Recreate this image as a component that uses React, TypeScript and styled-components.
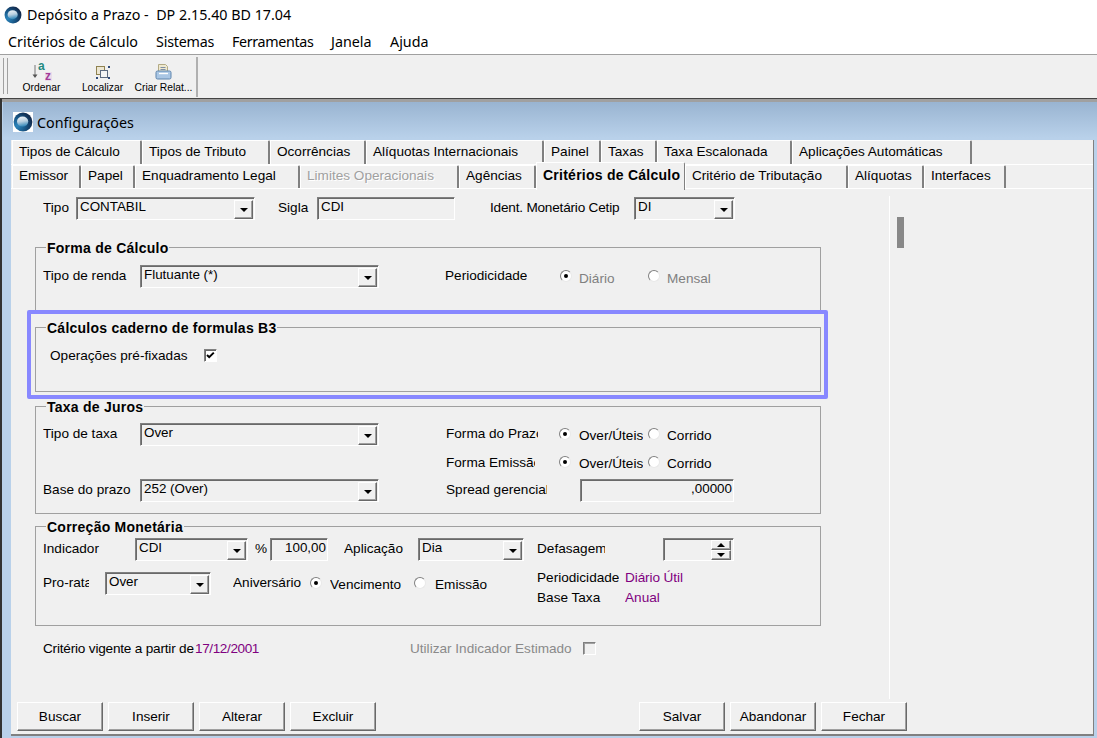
import React from "react";
import styled, { createGlobalStyle } from "styled-components";

const Global = createGlobalStyle`
  html, body { margin: 0; padding: 0; background: #fff; }
  #root { width: 1097px; height: 738px; overflow: hidden; }
`;
const ui = `"Noto Sans", "Open Sans", sans-serif`;
const classic = `"Liberation Sans", Arial, sans-serif`;

const Page = styled.div`
  width: 1097px; height: 738px; display: flex; flex-direction: column; overflow: hidden; background: #fff; color: #000;
`;
const TitleBar = styled.div`
  height: 30px; display: flex; align-items: center; gap: 5px; padding-left: 4px; font: 14.3px ${ui}; box-sizing: border-box; padding-bottom: 1px;
`;
const TitleText = styled.span` white-space: pre; `;
const MenuBar = styled.div`
  height: 24px; display: flex; padding: 0 0 2px 8px; box-sizing: border-box; align-items: center; font: 14.3px ${ui};
`;
const MenuItem = styled.span<{ $w: number; $ls?: number }>`
  width: ${(p) => p.$w}px; letter-spacing: ${(p) => p.$ls ?? 0}px; white-space: nowrap;
`;
const Toolbar = styled.div`
  height: 43px; display: flex; background: #f0f0f0; border-top: 1px solid #a0a0a0; padding-left: 3px;
`;
const Grip = styled.div`
  width: 3px; margin-top: 3px; height: 36px; border-left: 1px solid #a0a0a0; border-right: 1px solid #a0a0a0; margin-right: 3px;
`;
const ToolGroup = styled.div`
  width: 185px; display: flex; border-right: 2px solid #b0b0b0; margin-top: 2px; margin-bottom: 1px;
`;
const ToolButton = styled.div`
  width: 61px; display: flex; flex-direction: column; align-items: center; padding-top: 5px; font: 10.3px/14px ${classic};
  white-space: nowrap;
`;
const ToolIcon = styled.span` height: 19px; display: flex; align-items: center; `;
const IconSvg = styled.svg` overflow: visible; `;
const Window = styled.div`
  flex: 1; display: flex; flex-direction: column; border-top: 1px solid #444; border-left: 2px solid #333; min-height: 0;
  background: linear-gradient(#a0a0a0 0 3px, #b9d1ea 3px);
`;
const WinTitle = styled.div`
  height: 36px; margin: 3px 0 0 1px; padding: 4px 0 0 10px; display: flex; align-items: center; gap: 4px; font: 14.3px ${ui};
  background: linear-gradient(#99b4d1, #b9d1ea);
  box-sizing: border-box;
`;
const IconBox = styled.span` width: 20px; height: 20px; background: #fff; display: flex; `;
const Client = styled.div`
  flex: 1; margin: 2px 3px 2px 9px; background: #f0f0f0; border-bottom: 2px solid #808080;
  border-right: 1px solid #808080; display: flex; flex-direction: column; min-height: 0;
`;
const TabRow = styled.div<{ $line?: boolean }>`
  height: 24px; display: flex; padding-left: 1px; flex: none;
  ${(p) => (p.$line ? "border-top: 1px solid #fff; height: 23px; border-bottom: 1px solid #fff;" : "")}
`;
const Tab = styled.div<{ $w: number; $active?: boolean; $off?: boolean; $pb: number }>`
  width: ${(p) => p.$w}px; box-sizing: border-box; padding: 0 0 ${(p) => p.$pb}px 6px; display: flex; align-items: center; white-space: nowrap;
  font: 13.6px ${classic};
  color: ${(p) => (p.$off ? "#a0a0a0" : "#000")};
  ${(p) => (p.$off ? "text-shadow: 1px 1px 0 #fff;" : "")}
  border-left: 1px solid #fff; border-top: 1px solid #fff; border-right: 2px solid #808080; border-top-right-radius: 2px;
  ${(p) =>
    p.$active
      ? `height: 28px; margin-top: -3px; background: #f0f0f0; position: relative; z-index: 1; padding-bottom: 4px; border-right-width: 1px;
         font: bold 14px ${classic}; letter-spacing: 0.25px;`
      : ""}
`;
const Body = styled.div` flex: 1; display: flex; min-height: 0; flex-direction: column; `;
const Panels = styled.div` display: flex; height: 510px; flex: none; `;
const Form = styled.div`
  width: 879px; margin-top: 7px; box-sizing: border-box; border-right: 1px solid #fff; padding: 1px 0 0 24px;
  display: flex; flex-direction: column; height: 503px;
`;
const Scroll = styled.div` width: 7px; height: 31px; background: #888; margin: 28px 0 0 7px; `;
const Row = styled.div<{ $h?: number; $pl?: number; $mt?: number }>`
  display: flex; align-items: center; height: ${(p) => p.$h ?? 23}px; flex: none;
  padding-left: ${(p) => p.$pl ?? 0}px; margin-top: ${(p) => p.$mt ?? 0}px;
  font: 13.6px ${classic};
`;
const Label = styled.span<{ $w?: number; $ml?: number; $dy?: number; $c?: string; $ls?: number }>`
  display: block; white-space: nowrap; overflow: hidden; line-height: 15px;
  ${(p) => (p.$w ? `width: ${p.$w}px; flex: none;` : "")}
  margin-left: ${(p) => p.$ml ?? 0}px;
  letter-spacing: ${(p) => p.$ls ?? 0}px;
  position: relative; top: ${(p) => p.$dy ?? -1}px;
  color: ${(p) => p.$c ?? "#000"};
`;
const Sunken = styled.div<{ $w: number; $ml?: number; $right?: boolean }>`
  width: ${(p) => p.$w}px; height: 23px; flex: none; box-sizing: border-box; margin-left: ${(p) => p.$ml ?? 0}px;
  border: 1px solid; border-color: #808080 #fff #fff #808080; box-shadow: inset 1px 1px 0 #696969;
  display: flex; justify-content: ${(p) => (p.$right ? "flex-end" : "space-between")};
  padding: 1px 0 0 3px; font: 13.4px/16px ${classic}; background: #f0f0f0;
  ${(p) => (p.$right ? "padding-right: 1px;" : "")}
`;
const Drop = styled.div`
  width: 19px; height: 19px; box-sizing: border-box; margin: 1px 1px 0 0; flex: none; display: flex; align-items: center; justify-content: center;
  border: 1px solid; border-color: #fff #696969 #696969 #fff; box-shadow: inset -1px -1px 0 #a0a0a0;
`;
const Arrow = styled.i<{ $up?: boolean }>`
  display: block; width: 0; height: 0; border-left: 4px solid transparent; border-right: 4px solid transparent;
  ${(p) => (p.$up ? "border-bottom: 4px solid #000;" : "border-top: 4px solid #000;")}
`;
const SpinBox = styled.div`
  width: 20px; height: 19px; margin: 0 1px 0 0; display: flex; flex-direction: column; flex: none;
`;
const SpinBtn = styled(Drop)` width: 20px; height: 10px; margin: 0; `;
const RadioDot = styled.span<{ $on?: boolean; $ml?: number }>`
  width: 12px; height: 12px; flex: none; box-sizing: border-box; border-radius: 50%; margin-left: ${(p) => p.$ml ?? 0}px;
  background: #fff; border: 1px solid; border-color: #808080 #e8e8e8 #e8e8e8 #808080; display: flex; align-items: center; justify-content: center;
  position: relative; top: -1px;
  &::after { content: ""; width: 4px; height: 4px; border-radius: 50%; background: ${(p) => (p.$on ? "#000" : "transparent")}; }
`;
const Check = styled.span<{ $ml?: number; $off?: boolean }>`
  width: 13px; height: 13px; flex: none; box-sizing: border-box; background: ${(p) => (p.$off ? "#f0f0f0" : "#fff")};
  border: 1px solid; border-color: #808080 #fff #fff #808080; box-shadow: inset 1px 1px 0 ${(p) => (p.$off ? "#a0a0a0" : "#696969")};
  margin-left: ${(p) => p.$ml ?? 0}px; display: flex;
`;
const Section = styled.section<{ $h: number; $mt?: number; $pt: number }>`
  position: relative; box-sizing: border-box; width: 786px; height: ${(p) => p.$h}px; flex: none;
  margin-top: ${(p) => p.$mt ?? 0}px; padding: ${(p) => p.$pt}px 0 0 7px;
  border: 1px solid #a0a0a0;
  display: flex; flex-direction: column;
`;
const Legend = styled.span`
  position: absolute; left: 10px; top: -7px; padding: 0 1px; background: #f0f0f0; font: bold 14px/15px ${classic};
  letter-spacing: 0.25px; white-space: nowrap;
`;
const Highlight = styled.div`
  width: 801px; height: 89px; box-sizing: border-box; flex: none; margin: -3px 0 0 -8px; padding: 13px 0 0 4px; position: relative;
  border: 4px solid #8888ff; border-radius: 2px; background: #f0f0f0;
`;
const Stack = styled.div`
  display: flex; flex-direction: column; gap: 5px; align-self: flex-start; margin-top: -2px; font: 13.6px ${classic};
`;
const Line = styled.div` display: flex; `;
const Footer = styled.div` display: flex; padding: 3px 0 0 6px; height: 29px; `;
const Btn = styled.div<{ $ml?: number }>`
  width: 86px; height: 29px; box-sizing: border-box; margin-left: ${(p) => p.$ml ?? 0}px; flex: none;
  border: 1px solid; border-color: #fff #696969 #696969 #fff; box-shadow: inset -1px -1px 0 #a0a0a0;
  display: flex; align-items: center; justify-content: center; font: 13.6px ${classic};
`;

let uid = 0;
const Logo = ({ size }: { size: number }) => {
  const id = React.useMemo(() => `lg${uid++}`, []);
  return (
    <svg width={size} height={size} viewBox="0 0 20 20" aria-hidden>
      <defs>
        <radialGradient id={`${id}o`} cx="0.2" cy="0.7" r="0.9">
          <stop offset="0" stopColor="#2b86bd" />
          <stop offset="0.55" stopColor="#16507f" />
          <stop offset="1" stopColor="#101f3e" />
        </radialGradient>
        <linearGradient id={`${id}i`} x1="0" y1="0" x2="0.2" y2="1">
          <stop offset="0" stopColor="#f4f6f8" />
          <stop offset="0.55" stopColor="#b8cfe0" />
          <stop offset="1" stopColor="#3e8dbc" />
        </linearGradient>
      </defs>
      <circle cx="10" cy="10" r="9.4" fill={`url(#${id}o)`} />
      <ellipse cx="9.6" cy="9.6" rx="5.6" ry="5" fill={`url(#${id}i)`} />
    </svg>
  );
};
const SortIcon = () => (
  <IconSvg width="20" height="19" viewBox="0 0 20 19" aria-hidden>
    <path d="M3 3v12" stroke="#8a8a8a" strokeWidth="1.2" />
    <path d="M0.5 12.5h5L3 16z" fill="#555" />
    <text x="6" y="8" fontFamily="Liberation Sans" fontWeight="700" fontSize="12" fill="#1f8a80">a</text>
    <rect x="13" y="10" width="7" height="9" fill="#eadcea" />
    <text x="13" y="18" fontFamily="Liberation Sans" fontWeight="700" fontSize="12" fill="#a23a98">z</text>
  </IconSvg>
);
const FindIcon = () => (
  <svg width="16" height="16" viewBox="0 0 16 16" aria-hidden>
    <rect x="1.5" y="2.5" width="8" height="8" fill="#ece6d2" stroke="#8f8250" />
    <rect x="5.5" y="6.5" width="7" height="7" fill="#f4f4f4" stroke="#5d6b80" />
    <path d="M13 2h2v2h-2zM1 13h2v2H1zM13 13h2v2h-2z" fill="#2f4a78" />
  </svg>
);
const PrintIcon = () => (
  <svg width="17" height="18" viewBox="0 0 17 18" aria-hidden>
    <path d="M3.5 1.5h7l2 2v6h-9z" fill="#efe9cf" stroke="#b3aa85" />
    <rect x="1" y="8" width="15" height="8" rx="1.5" fill="#a9c6e4" stroke="#5f85ad" />
    <path d="M4 10.5h9" stroke="#fff" strokeWidth="1.4" />
    <path d="M5.5 4.5h5M5.5 6.5h5" stroke="#7f8fa5" />
  </svg>
);
const Tick = () => (
  <svg width="11" height="11" viewBox="0 0 11 11" aria-hidden>
    <path d="M2 5l2.2 2.2L8.8 2.6" fill="none" stroke="#000" strokeWidth="2" />
  </svg>
);

const Combo = ({ w, ml, v }: { w: number; ml?: number; v: string }) => (
  <Sunken $w={w} $ml={ml}>
    <span>{v}</span>
    <Drop><Arrow /></Drop>
  </Sunken>
);
const Radio = ({ on, ml }: { on?: boolean; ml?: number }) => <RadioDot $on={on} $ml={ml} />;

const row1 = [
  ["Tipos de Cálculo", 130], ["Tipos de Tributo", 128], ["Ocorrências", 96], ["Alíquotas Internacionais", 178],
  ["Painel", 57], ["Taxas", 56], ["Taxa Escalonada", 135], ["Aplicações Automáticas", 180],
] as const;
const row2 = [
  ["Emissor", 69], ["Papel", 54], ["Enquadramento Legal", 165], ["Limites Operacionais", 159],
  ["Agências", 77], ["Critérios de Cálculo", 149], ["Critério de Tributação", 163], ["Alíquotas", 76], ["Interfaces", 82],
] as const;

export default function App() {
  return (
    <Page>
      <Global />
      <TitleBar>
        <Logo size={18} />
        <TitleText>Depósito a Prazo -  DP 2.15.40 BD 17.04</TitleText>
      </TitleBar>
      <MenuBar>
        <MenuItem $w={148}>Critérios de Cálculo</MenuItem>
        <MenuItem $w={76} $ls={-0.2}>Sistemas</MenuItem>
        <MenuItem $w={99} $ls={-0.35}>Ferramentas</MenuItem>
        <MenuItem $w={59}>Janela</MenuItem>
        <MenuItem $w={45}>Ajuda</MenuItem>
      </MenuBar>
      <Toolbar>
        <Grip />
        <ToolGroup>
          <ToolButton><ToolIcon><SortIcon /></ToolIcon>Ordenar</ToolButton>
          <ToolButton><ToolIcon><FindIcon /></ToolIcon>Localizar</ToolButton>
          <ToolButton><ToolIcon><PrintIcon /></ToolIcon>Criar Relat...</ToolButton>
        </ToolGroup>
      </Toolbar>
      <Window>
        <WinTitle>
          <IconBox><Logo size={20} /></IconBox>
          Configurações
        </WinTitle>
        <Client>
          <TabRow>
            {row1.map(([t, w]) => <Tab key={t} $w={w} $pb={2}>{t}</Tab>)}
          </TabRow>
          <TabRow $line>
            {row2.map(([t, w]) => (
              <Tab key={t} $w={w} $pb={3} $active={t === "Critérios de Cálculo"} $off={t === "Limites Operacionais"}>{t}</Tab>
            ))}
          </TabRow>
          <Body>
            <Panels>
              <Form>
                <Row $pl={8}>
                  <Label $w={33}>Tipo</Label>
                  <Combo w={179} v="CONTABIL" />
                  <Label $w={39} $ml={23}>Sigla</Label>
                  <Sunken $w={138}>CDI</Sunken>
                  <Label $w={144} $ml={35} $ls={-0.2}>Ident. Monetário Cetip</Label>
                  <Combo w={101} v="DI" />
                </Row>
                <Section $h={66} $mt={27} $pt={17}>
                  <Legend>Forma de Cálculo</Legend>
                  <Row>
                    <Label $w={97}>Tipo de renda</Label>
                    <Combo w={239} v="Flutuante (*)" />
                    <Label $w={82} $ml={66}>Periodicidade</Label>
                    <Radio on ml={33} />
                    <Label $w={76} $ml={7} $dy={2} $c="#808080">Diário</Label>
                    <Radio ml={-7} />
                    <Label $ml={7} $dy={2} $c="#808080">Mensal</Label>
                  </Row>
                </Section>
                <Highlight>
                  <Section $h={65} $pt={20}>
                    <Legend>Cálculos caderno de formulas B3</Legend>
                    <Row $h={14} $pl={7}>
                      <Label $w={154} $dy={0}>Operações pré-fixadas</Label>
                      <Check><Tick /></Check>
                    </Row>
                  </Section>
                </Highlight>
                <Section $h={108} $mt={7} $pt={16}>
                  <Legend>Taxa de Juros</Legend>
                  <Row>
                    <Label $w={97}>Tipo de taxa</Label>
                    <Combo w={239} v="Over" />
                    <Label $w={92} $ml={67}>Forma do Prazo</Label>
                    <Radio on ml={21} />
                    <Label $w={64} $ml={8} $dy={1}>Over/Úteis</Label>
                    <Radio ml={5} />
                    <Label $ml={7} $dy={1}>Corrido</Label>
                  </Row>
                  <Row $h={21} $mt={6} $pl={403}>
                    <Label $w={89} $dy={0}>Forma Emissão</Label>
                    <Radio on ml={24} />
                    <Label $w={64} $ml={8} $dy={1}>Over/Úteis</Label>
                    <Radio ml={5} />
                    <Label $ml={7} $dy={1}>Corrido</Label>
                  </Row>
                  <Row $mt={6}>
                    <Label $w={97}>Base do prazo</Label>
                    <Combo w={239} v="252 (Over)" />
                    <Label $w={101} $ml={67}>Spread gerencial</Label>
                    <Sunken $w={154} $ml={33} $right>,00000</Sunken>
                  </Row>
                </Section>
                <Section $h={100} $mt={12} $pt={11}>
                  <Legend>Correção Monetária</Legend>
                  <Row>
                    <Label $w={92}>Indicador</Label>
                    <Combo w={113} v="CDI" />
                    <Label $w={15} $ml={7}>%</Label>
                    <Sunken $w={58} $right>100,00</Sunken>
                    <Label $w={60} $ml={16}>Aplicação</Label>
                    <Combo w={106} ml={14} v="Dia" />
                    <Label $w={68} $ml={13}>Defasagem</Label>
                    <Sunken $w={71} $ml={58} $right>
                      <SpinBox>
                        <SpinBtn><Arrow $up /></SpinBtn>
                        <SpinBtn><Arrow /></SpinBtn>
                      </SpinBox>
                    </Sunken>
                  </Row>
                  <Row $mt={11}>
                    <Label $w={46}>Pro-rata</Label>
                    <Combo w={106} ml={16} v="Over" />
                    <Label $w={72} $ml={22}>Aniversário</Label>
                    <Radio on ml={5} />
                    <Label $w={85} $ml={8} $dy={1}>Vencimento</Label>
                    <Radio ml={-1} />
                    <Label $w={102} $ml={9} $dy={1}>Emissão</Label>
                    <Stack>
                      <Line>
                        <Label $w={82} $dy={0}>Periodicidade</Label>
                        <Label $ml={6} $dy={0} $c="#800080" $ls={-0.1}>Diário Útil</Label>
                      </Line>
                      <Line>
                        <Label $w={65} $dy={0}>Base Taxa</Label>
                        <Label $ml={23} $dy={0} $c="#800080">Anual</Label>
                      </Line>
                    </Stack>
                  </Row>
                </Section>
                <Row $h={14} $mt={15} $pl={8}>
                  <Label $w={152} $dy={0} $ls={-0.2}>Critério vigente a partir de</Label>
                  <Label $w={215} $dy={0} $c="#800080" $ls={-0.4}>17/12/2001</Label>
                  <Label $w={173} $dy={0} $c="#8a8a8a">Utilizar Indicador Estimado</Label>
                  <Check $off />
                </Row>
              </Form>
              <Scroll />
            </Panels>
            <Footer>
              <Btn>Buscar</Btn>
              <Btn $ml={5}>Inserir</Btn>
              <Btn $ml={5}>Alterar</Btn>
              <Btn $ml={5}>Excluir</Btn>
              <Btn $ml={263}>Salvar</Btn>
              <Btn $ml={5}>Abandonar</Btn>
              <Btn $ml={5}>Fechar</Btn>
            </Footer>
          </Body>
        </Client>
      </Window>
    </Page>
  );
}
